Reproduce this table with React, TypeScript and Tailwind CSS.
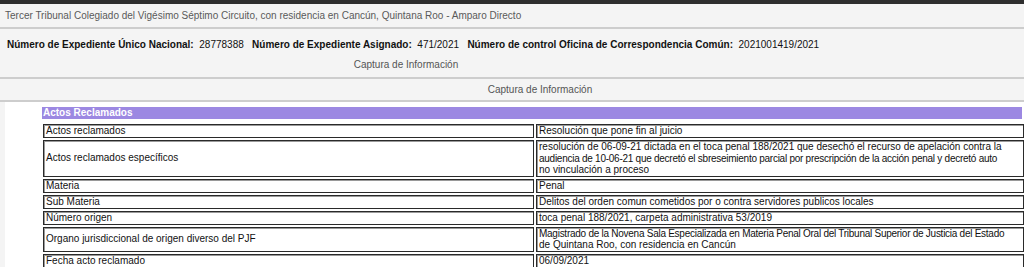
import React from "react";

type Line = { t: string; tight?: boolean };
const rows: { label: string; value: Line[] }[] = [
  { label: "Actos reclamados", value: [{ t: "Resolución que pone fin al juicio" }] },
  {
    label: "Actos reclamados específicos",
    value: [
      { t: "resolución de 06-09-21 dictada en el toca penal 188/2021 que desechó el recurso de apelación contra la" },
      {
        t: "audiencia de 10-06-21 que decretó el sbreseimiento parcial por prescripción de la acción penal y decretó auto",
        tight: true,
      },
      { t: "no vinculación a proceso" },
    ],
  },
  { label: "Materia", value: [{ t: "Penal" }] },
  { label: "Sub Materia", value: [{ t: "Delitos del orden comun cometidos por o contra servidores publicos locales" }] },
  { label: "Número origen", value: [{ t: "toca penal 188/2021, carpeta administrativa 53/2019" }] },
  {
    label: "Organo jurisdiccional de origen diverso del PJF",
    value: [
      {
        t: "Magistrado de la Novena Sala Especializada en Materia Penal Oral del Tribunal Superior de Justicia del Estado",
        tight: true,
      },
      { t: "de Quintana Roo, con residencia en Cancún" },
    ],
  },
  { label: "Fecha acto reclamado", value: [{ t: "06/09/2021" }] },
];

export default function App() {
  return (
    <div className="w-[1024px] h-[267px] overflow-hidden bg-[#f4f4f4] font-['Liberation_Sans',Arial,sans-serif] text-[10px] leading-[12px]">
      <div className="h-[4px] bg-[#2e2e2e]" />
      <div className="h-[25px] px-[5px] flex items-center text-[#5a5a5a] border-b-2 border-[#cdcdcd]">
        Tercer Tribunal Colegiado del Vigésimo Séptimo Circuito, con residencia en Cancún, Quintana Roo - Amparo Directo
      </div>
      <div className="h-[50px] border-b-2 border-[#cdcdcd]">
        <div className="h-[31px] px-[7px] flex items-center text-[#111] whitespace-pre">
          <span className="font-bold">Número de Expediente Único Nacional:</span>
          <span>{"  28778388   "}</span>
          <span className="font-bold">Número de Expediente Asignado:</span>
          <span>{"  471/2021   "}</span>
          <span className="font-bold">Número de control Oficina de Correspondencia Común:</span>
          <span>{"  2021001419/2021"}</span>
        </div>
        <div className="h-[10px] flex items-center justify-center text-[#555] pr-[212px]">Captura de Información</div>
      </div>
      <div className="h-[23px] flex items-center justify-center text-[#555] pl-[56px] border-b-2 border-[#cdcdcd]">
        Captura de Información
      </div>
      <div className="ml-[5px] bg-white h-[200px] pl-[37px] pr-[2px] pt-[5px]">
        <div className="h-[12px] bg-[#9c88e2] text-white font-bold flex items-center pl-[1px]">Actos Reclamados</div>
        <div className="mt-[5px] grid grid-cols-[491px_488px] gap-x-[2px] gap-y-[2px] pl-[1px]">
          {rows.map((r) => (
            <React.Fragment key={r.label}>
              <div className="border border-[#2a2a2a] shadow-[inset_1px_1px_0_#9a9a9a] text-[#111] px-[2px] flex items-center">
                {r.label}
              </div>
              <div className="border border-[#2a2a2a] shadow-[inset_1px_1px_0_#9a9a9a] text-[#111] px-[2px] leading-[11.5px]">
                {r.value.map((v, i) => (
                  <div key={i} className={v.tight ? "whitespace-nowrap tracking-[-0.26px]" : "whitespace-nowrap"}>
                    {v.t}
                  </div>
                ))}
              </div>
            </React.Fragment>
          ))}
        </div>
      </div>
    </div>
  );
}
